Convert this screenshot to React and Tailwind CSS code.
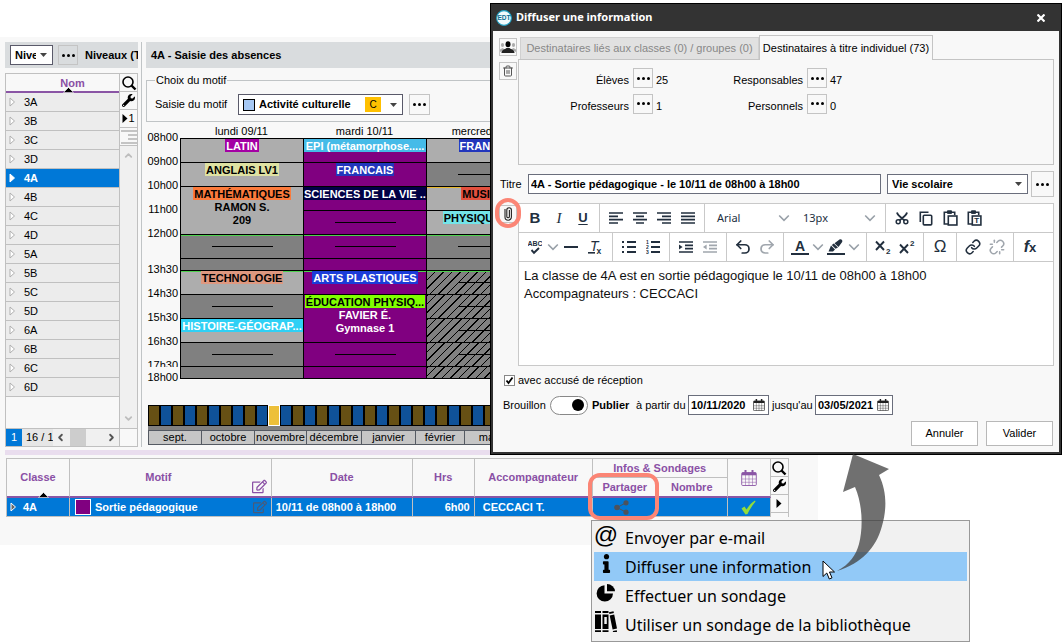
import { useState } from 'react'
import clsx from 'clsx'
import { FaWrench, FaInfo, FaRegEdit } from 'react-icons/fa'
import { ChevronDown, ChevronUp, ChevronLeft, ChevronRight, Trash2, Link, Unlink, Undo2, Redo2 } from 'lucide-react'

const CLASSES = ['3A', '3B', '3C', '3D', '4A', '4B', '4C', '4D', '5A', '5B', '5C', '5D', '6A', '6B', '6C', '6D']

const HOURS = ['08h00', '09h00', '10h00', '11h00', '12h00', '13h30', '14h30', '15h30', '16h30', '17h30', '18h00']

const MONTHS = [
  { name: 'sept.', width: 'w-[53px]' },
  { name: 'octobre', width: 'w-[53px]' },
  { name: 'novembre', width: 'w-[52px]' },
  { name: 'décembre', width: 'w-[55px]' },
  { name: 'janvier', width: 'w-[54px]' },
  { name: 'février', width: 'w-[49px]' },
  { name: 'mars', width: 'w-[53px]' },
]

const H1 = 'h-6'
const H2 = 'h-12'
const HALF = 'h-3'
const GREEN = 'shadow-[inset_0_1px_0_#4fd14f]'
const YELLOW = 'shadow-[inset_0_1px_0_#e8b92c]'

const DAYS = [
  {
    name: 'lundi 09/11',
    cells: [
      { h: H1, bg: 'bg-[#adadad]', label: 'LATIN', tag: 'bg-[#a400a4] text-white' },
      { h: H1, bg: 'bg-[#adadad]', label: 'ANGLAIS LV1', tag: 'bg-[#dfe2a2]' },
      { h: H2, bg: 'bg-[#adadad]', label: 'MATHÉMATIQUES', tag: 'bg-[#fb7b3c]', more: ['RAMON S.', '209'] },
      { h: H1, bg: 'bg-[#808080]', line: true, mark: GREEN },
      { h: HALF, bg: 'bg-[#808080]' },
      { h: H1, bg: 'bg-[#adadad]', label: 'TECHNOLOGIE', tag: 'bg-[#de9880]', mark: GREEN },
      { h: H1, bg: 'bg-[#808080]', line: true },
      { h: H1, bg: 'bg-[#adadad]', label: 'HISTOIRE-GÉOGRAP...', tag: 'bg-[#2fd0f5] text-white' },
      { h: H1, bg: 'bg-[#808080]', line: true },
      { h: HALF, bg: 'bg-[#808080]' },
    ],
  },
  {
    name: 'mardi 10/11',
    cells: [
      { h: H1, bg: 'bg-[#800080]', label: 'EPI (métamorphose.....', tag: 'w-full bg-[#45bbe8] text-white' },
      { h: H1, bg: 'bg-[#800080]', label: 'FRANCAIS', tag: 'bg-[#2236bc] text-white' },
      { h: H1, bg: 'bg-[#800080]', label: 'SCIENCES DE LA VIE .....', tag: 'w-full bg-[#000045] text-white' },
      { h: H1, bg: 'bg-[#800080]', line: true },
      { h: H1, bg: 'bg-[#800080]', line: true, mark: GREEN },
      { h: HALF, bg: 'bg-[#800080]' },
      { h: H1, bg: 'bg-[#800080]', label: 'ARTS PLASTIQUES', tag: 'bg-[#1b3cd8] text-white', mark: GREEN },
      { h: H2, bg: 'bg-[#800080] text-white', label: 'ÉDUCATION PHYSIQ...', tag: 'bg-[#80ff00] text-black', more: ['FAVIER É.', 'Gymnase 1'] },
      { h: H1, bg: 'bg-[#800080]', line: true },
      { h: HALF, bg: 'bg-[#800080]' },
    ],
  },
  {
    name: 'mercredi 11/11',
    cells: [
      { h: H1, bg: 'bg-[#adadad]', label: 'FRANCAIS', tag: 'bg-[#2236bc] text-white' },
      { h: H1, bg: 'bg-[#808080]', line: true },
      { h: H1, bg: 'bg-[#adadad]', label: 'MUSIQUE', tag: 'bg-[#e2503e]', mark: YELLOW },
      { h: H1, bg: 'bg-[#adadad]', label: 'PHYSIQUE-CHIM', tag: 'bg-[#74e4e8]' },
      { h: H1, bg: 'bg-[#808080]', line: true, mark: GREEN },
      { h: HALF, bg: 'bg-[#808080]' },
      { h: H1, hatched: true, line: true, mark: GREEN },
      { h: H1, hatched: true, line: true },
      { h: H1, hatched: true, line: true },
      { h: H1, hatched: true, line: true },
      { h: HALF, hatched: true },
    ],
  },
]

export default function App() {
  return (
    <div className="relative min-h-screen overflow-hidden bg-white font-['Liberation_Sans',Arial,sans-serif] text-[11px] text-black">
      <main className="mt-[37px] w-[77%] bg-[#f8f8f8] pt-[5px] pl-[5px] pb-7">
        <div className="flex">
          <LevelPanel />
          <AbsencePanel />
        </div>
        <div className="mt-[3px] h-[5px] bg-[#e9ddee]" />
        <AbsenceTable />
      </main>

      <InfoDialog />
      <ShareMenu />

      <div className="pointer-events-none absolute top-[473px] left-[588px] h-[47px] w-[71px] rounded-xl border-4 border-[#fb8575]" />
      <svg className="pointer-events-none absolute top-[454px] left-[830px]" width="64" height="128" viewBox="830 454 64 128">
        <path
          d="M853 454 L889 469 L879 475 C888 494 886 512 882 526 C876 548 862 563 837 571 C850 564 856 555 859 544 C863 528 863 506 855 487 L843 492 Z"
          fill="#404040"
          fillOpacity="0.75"
        />
      </svg>
      <svg className="pointer-events-none absolute top-[560px] left-[822px]" width="14" height="20" viewBox="0 0 14 20">
        <path d="M1 1 V16.5 L4.8 13 L7.3 19 L10 17.8 L7.5 12 H12.5 Z" fill="#fff" stroke="#000" />
      </svg>
    </div>
  )
}

function LevelPanel() {
  const [selected, setSelected] = useState('4A')
  return (
    <section className="flex w-[133px] shrink-0 flex-col">
      <header className="flex h-[26px] items-center bg-[#d9dcde] pl-[5px]">
        <label className="relative flex h-5 w-[43px] items-center">
          <select aria-label="Affichage" className="h-5 w-full appearance-none overflow-hidden border border-[#5a5a6a] bg-white pr-4 pl-1 font-bold">
            <option>Niveaux</option>
          </select>
          <Caret className="absolute right-1.5" />
        </label>
        <DotsButton label="Choisir les niveaux" className="ml-[5px] h-5 w-5 bg-[#d9dcde]" />
        <h2 className="ml-[7px] flex-1 overflow-hidden font-bold whitespace-nowrap">Niveaux (T</h2>
      </header>

      <div className="mt-[5px] flex flex-1 border border-[#c0c0c0]">
        <div className="flex flex-1 flex-col">
          <table className="w-full border-separate border-spacing-0">
            <thead>
              <tr>
                <th className="relative h-[19px] border-b-2 border-[#8a55a5] p-0 pl-5 leading-4 text-[#8a50a5]">
                  Nom
                  <SortMark />
                </th>
              </tr>
            </thead>
            <tbody>
              {CLASSES.map((c) => (
                <tr key={c} onClick={() => setSelected(c)} className={c === selected ? 'bg-[#0078d7] font-bold text-white' : 'bg-[#ececec]'}>
                  <td className="h-[19px] border-b border-[#c0c0c0] p-0">
                    <span className="flex items-center">
                      <RowMark filled={c === selected} />
                      <span className="pl-2">{c}</span>
                    </span>
                  </td>
                </tr>
              ))}
            </tbody>
          </table>
          <div className="flex-1" />
          <div className="flex h-[18px] items-stretch border-t border-[#c0c0c0]">
            <span className="flex w-4 items-center justify-center bg-[#0078d7] text-white">1</span>
            <span className="flex w-[31px] items-center bg-[#e6e6e6] pl-1 whitespace-nowrap">16 / 1</span>
            <div className="flex flex-1 items-center justify-between bg-[#f0f0f0] px-0.5 text-[#555]">
              <ChevronLeft size={11} strokeWidth={4} />
              <span className="mr-auto ml-1 h-full w-4 bg-[#cdcdcd]" />
              <ChevronRight size={11} strokeWidth={4} />
            </div>
          </div>
        </div>
        <div className="flex w-[18px] flex-col border-l border-[#c0c0c0]">
          <ToolColumn>
            <span className="flex items-center">
              <PlayMark />1
            </span>
          </ToolColumn>
          <div className="flex h-[18px] items-center justify-center border-b border-[#c0c0c0]">
            <svg width="16" height="16" viewBox="0 0 16 16" stroke="#c4c4c4" strokeWidth="2">
              <path d="M0 2h16M7 6h9M7 10h9M0 14h16" />
            </svg>
          </div>
          <div className="flex flex-1 flex-col items-center justify-between bg-[#f0f0f0] py-1 text-[#bdbdbd]">
            <ChevronUp size={11} strokeWidth={4} />
            <ChevronDown size={11} strokeWidth={4} />
          </div>
          <div className="h-[18px] border-t border-[#c0c0c0]" />
        </div>
      </div>
    </section>
  )
}

function AbsencePanel() {
  return (
    <section className="ml-[3px] min-w-0 flex-1 overflow-hidden border-l border-[#c0c4c6] pb-0.5 pl-1">
      <header className="flex h-[26px] items-center bg-[#d9dcde] pl-[5px]">
        <h2 className="font-bold">4A - Saisie des absences</h2>
      </header>

      <fieldset className="mt-[5px] border border-[#c0c4c6] px-2 pt-[7px] pb-[6px]">
        <legend className="px-px leading-[14px]">Choix du motif</legend>
        <div className="flex items-center">
          <label htmlFor="motif" className="w-[83px]">Saisie du motif</label>
          <div className="relative flex items-center">
            <select id="motif" className="h-[21px] w-[165px] appearance-none border border-[#5a5a6a] bg-white pl-5 font-bold">
              <option>Activité culturelle</option>
            </select>
            <span className="absolute left-[5px] h-3 w-3 border border-black bg-[#a6c8f4]" />
            <span className="absolute right-[22px] flex h-[15px] w-4 items-center justify-center bg-[#ffc000] text-[10px]">C</span>
            <Caret className="absolute right-1.5" />
          </div>
          <DotsButton label="Choisir un motif" className="ml-1.5 h-[21px] w-[21px]" />
        </div>
      </fieldset>

      <div className="mt-px flex">
        <div className="flex w-[34px] shrink-0 flex-col pt-0.5">
          {HOURS.map((h) => (
            <span
              key={h}
              className={clsx(
                'pr-0.5 text-right whitespace-nowrap',
                h === '17h30' ? 'h-[14px] overflow-hidden leading-6' : h === '18h00' ? 'h-5 leading-5' : 'h-6 leading-6',
                h === '13h30' && 'mt-3',
              )}
            >
              {h}
            </span>
          ))}
        </div>
        {DAYS.map((d) => (
          <Day key={d.name} day={d} />
        ))}
      </div>

      <div className="mt-[18px] ml-0.5">
        <div className="flex h-[21px] gap-0.5 overflow-hidden bg-black p-px">
          {Array.from({ length: 44 }, (_, i) => (
            <span
              key={i}
              className={clsx(
                'w-[10px] shrink-0',
                i === 10 ? 'bg-[#edc03a] outline outline-white' : i % 2 ? 'bg-[#0f5299]' : 'bg-[#665014]',
              )}
            />
          ))}
        </div>
        <div className="h-1 bg-[#808080]" />
        <div className="flex border border-[#555a63] bg-[#c6c6c6]">
          {MONTHS.map((m) => (
            <span key={m.name} className={clsx('h-[13px] border-r border-[#555a63] text-center leading-[13px]', m.width)}>
              {m.name}
            </span>
          ))}
        </div>
      </div>
    </section>
  )
}

function Day({ day }) {
  return (
    <div className="w-[123px] shrink-0">
      <div className="h-[15px] text-center leading-[17px]">{day.name}</div>
      <div className="border-b border-l border-black">
        {day.cells.map((c, i) => (
          <div
            key={i}
            className={clsx(
              'flex flex-col items-center overflow-hidden border-t border-black font-bold',
              c.h,
              c.mark,
              c.hatched ? 'bg-[#808080] bg-[repeating-linear-gradient(135deg,#000_0_1px,transparent_1px_6px)]' : c.bg,
              c.line && 'justify-center',
            )}
          >
            {c.line && <span className="h-px w-[61px] bg-black" />}
            {c.label && (
              <span className={clsx('h-[13px] text-center leading-[15px] whitespace-nowrap', c.tag, !c.tag.includes('w-full') && 'px-px')}>
                {c.label}
              </span>
            )}
            {c.more?.map((t) => (
              <span key={t} className="h-[13px] leading-[15px]">
                {t}
              </span>
            ))}
          </div>
        ))}
      </div>
    </div>
  )
}

function AbsenceTable() {
  const th = 'relative border-r border-b-2 border-r-[#c0c0c0] border-b-[#8a55a5] p-0 text-[#8a50a5]'
  const td = 'h-[19px] border-r border-b border-[#c0c0c0] p-0'
  return (
    <div className="mt-[3px] mr-[29px] ml-px flex border-t border-l border-[#c0c0c0]">
      <table className="flex-1 table-fixed border-separate border-spacing-0">
        <colgroup>
          <col className="w-[63px]" />
          <col />
          <col className="w-[141px]" />
          <col className="w-[62px]" />
          <col className="w-[118px]" />
          <col className="w-[64px]" />
          <col className="w-[71px]" />
          <col className="w-[43px]" />
        </colgroup>
        <thead>
          <tr>
            <th rowSpan={2} className={th}>
              Classe
              <SortMark />
            </th>
            <th rowSpan={2} className={th}>
              <span className="mr-6">Motif</span>
              <FaRegEdit size={15} className="absolute right-1 bottom-0.5" />
            </th>
            <th rowSpan={2} className={th}>Date</th>
            <th rowSpan={2} className={th}>Hrs</th>
            <th rowSpan={2} className={th}>Accompagnateur</th>
            <th colSpan={2} className="h-[19px] border-r border-b border-[#c0c0c0] p-0 text-[#8a50a5]">Infos &amp; Sondages</th>
            <th rowSpan={2} className={th} aria-label="Calendrier">
              <CalendarIcon className="mx-auto" size={16} color="#8a55a5" />
            </th>
          </tr>
          <tr>
            <th className="h-5 border-b-2 border-[#8a55a5] p-0 text-[#8a50a5]">Partager</th>
            <th className={th}>Nombre</th>
          </tr>
        </thead>
        <tbody>
          <tr className="bg-[#0078d7] font-bold text-white">
            <td className={td}>
              <span className="flex items-center">
                <RowMark filled={false} dark />
                <span className="pl-1.5">4A</span>
              </span>
            </td>
            <td className={td}>
              <span className="flex items-center pr-1 pl-[5px]">
                <span className="h-4 w-4 border border-white bg-[#800080]" />
                <span className="pl-1">Sortie pédagogique</span>
                <FaRegEdit size={14} className="ml-auto text-[#4a5a78]" />
              </span>
            </td>
            <td className={clsx(td, 'pl-1')}>10/11 de 08h00 à 18h00</td>
            <td className={clsx(td, 'pr-1 text-right')}>6h00</td>
            <td className={clsx(td, 'pl-2')}>CECCACI T.</td>
            <td className="border-b border-[#c0c0c0] p-0">
              <svg className="ml-[21px]" width="15" height="15" viewBox="0 0 15 15" fill="#4c525c">
                <circle cx="3" cy="7.5" r="2.8" />
                <circle cx="12" cy="2.8" r="2.6" />
                <circle cx="12" cy="12.2" r="2.6" />
                <path d="M12 2.8 L3 7.5 L12 12.2" fill="none" stroke="#4c525c" />
              </svg>
            </td>
            <td className={td} />
            <td className={td}>
              <svg className="mx-auto" width="15" height="15" viewBox="0 0 15 15">
                <path d="M0.5 8.5 L3.5 6.5 L5.5 9.5 C8 5.5 10.5 2.5 14 0.5 L14.5 1.5 C11.5 5 9 9 6.5 14 L4.5 14.5 Z" fill="#92dc3a" />
              </svg>
            </td>
          </tr>
        </tbody>
      </table>
      <div className="flex w-[18px] flex-col border-r border-[#c0c0c0]">
        <ToolColumn>
          <PlayMark />
        </ToolColumn>
      </div>
    </div>
  )
}

function ToolColumn({ children }) {
  const btn = 'flex h-[18px] items-center justify-center border-b border-[#c0c0c0] bg-[#f8f8f8]'
  return (
    <>
      <button className={btn} aria-label="Rechercher">
        <svg width="16" height="16" viewBox="0 0 16 16" fill="none" stroke="#000">
          <circle cx="7" cy="7" r="5" strokeWidth="1.6" />
          <path d="M10.5 10.5 L14.5 14.5" strokeWidth="2.4" />
        </svg>
      </button>
      <button className={btn} aria-label="Paramètres">
        <FaWrench size={13} />
      </button>
      <button className={btn} aria-label="Développer">
        {children}
      </button>
    </>
  )
}

function InfoDialog() {
  const [receipt, setReceipt] = useState(true)
  const [published, setPublished] = useState(true)
  return (
    <div role="dialog" aria-label="Diffuser une information" className="absolute top-[3px] right-0 left-[490px] border border-black bg-[#333] p-0.5 pt-0">
      <header className="flex h-[27px] items-center pr-3.5 pl-[3px] text-white">
        <svg width="16" height="16" viewBox="0 0 16 16">
          <circle cx="8" cy="8" r="7.4" fill="#f2fafc" stroke="#1a9cc0" strokeWidth="1.1" />
          <text x="8" y="10.4" textAnchor="middle" fontSize="6.5" fontWeight="bold" fill="#0b6d92">EDT</text>
        </svg>
        <h1 className="ml-1 font-['Noto_Sans',sans-serif] text-[11px] font-bold">Diffuser une information</h1>
        <button aria-label="Fermer" className="ml-auto">
          <svg width="8" height="8" viewBox="0 0 8 8" stroke="#fff" strokeWidth="2.2">
            <path d="M0.5 0.5 L7.5 7.5 M7.5 0.5 L0.5 7.5" />
          </svg>
        </button>
      </header>

      <div className="bg-[#f8f8f8] pt-1 pr-[5px] pb-[6px] pl-[6px]">
        <div className="flex">
          <div className="flex w-[19px] flex-col gap-[6px] pt-[3px]">
            <IconButton label="Destinataires">
              <svg width="16" height="14" viewBox="0 0 16 14">
                <g fill="#aaa">
                  <ellipse cx="2.5" cy="5" rx="1.6" ry="2" />
                  <ellipse cx="13.5" cy="5" rx="1.6" ry="2" />
                  <path d="M0 12V9.5L2.5 8 5 9.5M16 12V9.5L13.5 8 11 9.5" />
                </g>
                <ellipse cx="8" cy="4.2" rx="2.5" ry="3" fill="#000" />
                <path d="M1.5 13 C1.5 9.5 5 9.5 6.5 8 H9.5 C11 9.5 14.5 9.5 14.5 13Z" fill="#222" />
              </svg>
            </IconButton>
            <IconButton label="Supprimer">
              <Trash2 size={12} color="#555" />
            </IconButton>
          </div>
          <div className="flex-1">
            <div role="tablist" className="flex items-end pl-0.5">
              <button role="tab" aria-selected="false" className="h-[22px] w-[239px] border border-b-0 border-[#d0d0d0] bg-[#e1e1e1] whitespace-nowrap text-[#888]">
                Destinataires liés aux classes (0) / groupes (0)
              </button>
              <button role="tab" aria-selected="true" className="-mb-px h-[25px] w-[174px] border border-b-0 border-[#c4c4c4] bg-[#f8f8f8] whitespace-nowrap">
                Destinataires à titre individuel (73)
              </button>
            </div>
            <div className="flex h-[106px] items-start border border-[#c4c4c4] pt-2">
              <div className="flex w-[174px] flex-col gap-[5px]">
                <Recipient label="Élèves" count={25} />
                <Recipient label="Professeurs" count={1} />
              </div>
              <div className="flex w-[174px] flex-col gap-[5px]">
                <Recipient label="Responsables" count={47} />
                <Recipient label="Personnels" count={0} />
              </div>
            </div>
          </div>
        </div>

        <div className="mt-[6px] flex h-[26px] items-center">
          <label htmlFor="titre" className="w-[29px] pl-px">Titre</label>
          <input
            id="titre"
            defaultValue="4A - Sortie pédagogique - le 10/11 de 08h00 à 18h00"
            className="h-5 min-w-0 flex-1 border border-[#6a6e7c] bg-white px-0.5 font-bold"
          />
          <div className="relative ml-1.5 flex items-center">
            <select aria-label="Catégorie" className="h-5 w-[141px] appearance-none border border-[#6a6e7c] bg-white pl-1 font-bold">
              <option>Vie scolaire</option>
            </select>
            <Caret className="absolute right-1.5" />
          </div>
          <DotsButton label="Choisir une catégorie" className="ml-[3px] h-[26px] w-[23px]" />
        </div>

        <div className="mt-[6px] flex">
          <div className="relative w-[19px]">
            <button aria-label="Joindre un fichier" className="mt-0.5 flex h-[18px] w-[18px] items-center justify-center border border-[#c4c4c4]">
              <svg width="12" height="16" viewBox="0 0 12 16" fill="none" stroke="#222" strokeWidth="1.1">
                <path d="M3 3 V11 A3.2 3.2 0 0 0 9.4 11 V4 A2.3 2.3 0 0 0 4.8 4 V10.5 A1.3 1.3 0 0 0 7.4 10.5 V4" />
              </svg>
            </button>
            <span className="pointer-events-none absolute -top-[5px] -left-1 h-[30px] w-[26px] rounded-full border-4 border-[#fb8575]" />
          </div>
          <div className="flex-1 border border-[#c9c9c9] bg-white">
            <Toolbar />
            <textarea
              aria-label="Contenu"
              defaultValue={'La classe de 4A est en sortie pédagogique le 10/11 de 08h00 à 18h00\nAccompagnateurs : CECCACI'}
              className="block h-[103px] w-full resize-none px-[5px] py-[5px] text-[13px] leading-[18px] text-[#111]"
            />
          </div>
        </div>

        <label className="mt-[7px] flex h-[14px] items-center gap-[3px] pl-[5px]">
          <span className="relative flex h-[11px] w-[11px]">
            <input
              type="checkbox"
              checked={receipt}
              onChange={(e) => setReceipt(e.target.checked)}
              className="h-[11px] w-[11px] appearance-none border border-[#888] bg-white"
            />
            {receipt && (
              <svg className="pointer-events-none absolute inset-0" width="11" height="11" viewBox="0 0 11 11" fill="none" stroke="#000" strokeWidth="1.8">
                <path d="M2.5 5.5 L4.5 8 L8.5 2.5" />
              </svg>
            )}
          </span>
          avec accusé de réception
        </label>

        <div className="mt-2 flex h-5 items-center pl-1">
          <span className="w-[47px]">Brouillon</span>
          <label className="flex items-center">
            <input type="checkbox" role="switch" aria-label="Publier" checked={published} onChange={(e) => setPublished(e.target.checked)} className="peer sr-only" />
            <span className="flex h-[19px] w-[38px] items-center justify-start rounded-full border border-[#888] bg-white px-[3px] peer-checked:justify-end">
              <span className="h-3 w-3 rounded-full bg-black" />
            </span>
            <span className="ml-1 w-[44px] font-bold">Publier</span>
          </label>
          <label htmlFor="debut" className="w-[52px] whitespace-nowrap">à partir du</label>
          <DateField id="debut" value="10/11/2020" className="w-[81px]" />
          <label htmlFor="fin" className="ml-[3px] w-[43px] whitespace-nowrap">jusqu'au</label>
          <DateField id="fin" value="03/05/2021" className="w-[78px]" />
        </div>

        <div className="mt-[6px] flex justify-end gap-2 pr-px">
          <button className="h-[25px] w-[67px] border border-[#b8b8b8] bg-white">Annuler</button>
          <button className="h-[25px] w-[67px] border border-[#b8b8b8] bg-white">Valider</button>
        </div>
      </div>
    </div>
  )
}

function Recipient({ label, count }) {
  return (
    <div className="flex items-center">
      <span className="w-[110px] pt-1 text-right">{label}</span>
      <DotsButton label={label} className="mr-[3px] ml-1 h-5 w-5" />
      <span className="pt-1">{count}</span>
    </div>
  )
}

function DateField({ id, value, className }) {
  return (
    <div className={clsx('flex h-5 items-center border border-[#6a6e7c] bg-white pr-[3px]', className)}>
      <input id={id} defaultValue={value} className="min-w-0 flex-1 pl-0.5 font-bold" />
      <CalendarIcon size={12} color="#222" />
    </div>
  )
}

function Toolbar() {
  const group = 'flex items-center border-r border-[#c9c9c9] text-[#222f3e]'
  return (
    <div>
      <div className="flex h-[29px] border-b border-[#c9c9c9]">
        <div className={clsx(group, 'w-[81px] pl-1')}>
          <Tool label="Gras"><span className="text-[15px] font-bold">B</span></Tool>
          <Tool label="Italique"><span className="font-['Liberation_Serif',serif] text-[15px] italic">I</span></Tool>
          <Tool label="Souligné"><span className="text-[13px] font-bold underline underline-offset-2">U</span></Tool>
        </div>
        <div className={clsx(group, 'w-[105px] pl-1')}>
          <Tool label="Aligner à gauche"><Bars d="M0 1h14M0 4.3h9M0 7.6h14M0 11h9" /></Tool>
          <Tool label="Centrer"><Bars d="M0 1h14M3 4.3h8M0 7.6h14M3 11h8" /></Tool>
          <Tool label="Aligner à droite"><Bars d="M0 1h14M5 4.3h9M0 7.6h14M5 11h9" /></Tool>
          <Tool label="Justifier"><Bars d="M0 1h14M0 4.3h14M0 7.6h14M0 11h14" /></Tool>
        </div>
        <div className={clsx(group, "w-[181px] pl-3 font-['Noto_Sans',sans-serif] text-[11px]")}>
          <button className="flex w-[73px] items-center justify-between">
            Arial <Chevron />
          </button>
          <button className="ml-[13px] flex w-[73px] items-center justify-between">
            13px <Chevron />
          </button>
        </div>
        <div className="flex items-center pl-1 text-[#222f3e]">
          <Tool label="Couper">
            <svg width="14" height="14" viewBox="0 0 14 14" fill="none" stroke="currentColor">
              <circle cx="3.2" cy="10.8" r="2" strokeWidth="1.5" />
              <circle cx="10.8" cy="10.8" r="2" strokeWidth="1.5" />
              <path d="M2 1.5 C3 5 7 7 9.5 9.5 M12 1.5 C11 5 7 7 4.5 9.5" strokeWidth="1.9" />
            </svg>
          </Tool>
          <Tool label="Copier">
            <svg width="14" height="15" viewBox="0 0 14 15" fill="none" stroke="currentColor" strokeWidth="1.6">
              <path d="M1.3 11V1.3H9.5" />
              <rect x="4.3" y="4.3" width="8.4" height="9.6" rx="1" />
            </svg>
          </Tool>
          <Tool label="Coller"><Clipboard /></Tool>
          <Tool label="Coller comme texte"><Clipboard text /></Tool>
        </div>
      </div>

      <div className="flex h-[29px] border-b border-[#c9c9c9]">
        <div className={clsx(group, 'w-[94px] pl-1')}>
          <Tool label="Orthographe">
            <svg width="14" height="15" viewBox="0 0 14 15">
              <text x="7" y="6" textAnchor="middle" fontSize="7" fontWeight="bold" fill="currentColor">ABC</text>
              <path d="M3.5 10 L6 12.8 L11 8" fill="none" stroke="currentColor" strokeWidth="1.9" />
            </svg>
          </Tool>
          <Chevron />
          <Tool label="Ligne horizontale"><span className="h-0.5 w-[14px] bg-current" /></Tool>
          <Tool label="Effacer la mise en forme">
            <svg width="16" height="16" viewBox="0 0 16 16" fill="currentColor">
              <text x="3" y="12" fontSize="14" fontStyle="italic">T</text>
              <text x="9.5" y="14.5" fontSize="8.5" fontWeight="bold">x</text>
              <path d="M1 13h7v1.6H1z" />
            </svg>
          </Tool>
        </div>
        <div className={clsx(group, 'w-[57px] pl-1')}>
          <Tool label="Liste à puces">
            <svg width="14" height="12" viewBox="0 0 14 12" stroke="currentColor" strokeWidth="1.8">
              <path d="M0 1h2M0 6h2M0 11h2M5 1h9M5 6h9M5 11h9" />
            </svg>
          </Tool>
          <Tool label="Liste numérotée">
            <svg width="14" height="14" viewBox="0 0 14 14">
              <g fontSize="5" fontWeight="bold" fill="currentColor">
                <text x="0" y="4">1</text>
                <text x="0" y="9">2</text>
                <text x="0" y="14">3</text>
              </g>
              <path d="M5 2h9M5 7h9M5 12h9" stroke="currentColor" strokeWidth="1.8" />
            </svg>
          </Tool>
        </div>
        <div className={clsx(group, 'w-[57px] pl-1')}>
          <Tool label="Augmenter le retrait"><Bars d="M0 1h14M6 4.3h8M6 7.6h8M0 11h14" tip="M0 3.5L3.6 6L0 8.5Z" /></Tool>
          <Tool label="Diminuer le retrait" muted><Bars d="M0 1h14M6 4.3h8M6 7.6h8M0 11h14" tip="M3.6 3.5L0 6L3.6 8.5Z" /></Tool>
        </div>
        <div className={clsx(group, 'w-[57px] pl-1')}>
          <Tool label="Annuler la saisie"><Undo2 size={18} strokeWidth={2.3} /></Tool>
          <Tool label="Rétablir" muted><Redo2 size={18} strokeWidth={2.3} /></Tool>
        </div>
        <div className={clsx(group, 'w-[83px] pl-1')}>
          <Tool label="Couleur du texte">
            <span className="flex w-[18px] flex-col items-center border-b-2 border-current text-[14px] leading-[14px] font-bold">A</span>
          </Tool>
          <Chevron />
          <Tool label="Surlignage">
            <svg width="18" height="16" viewBox="0 0 18 16" fill="currentColor">
              <path d="M0 14h18v2H0z" />
              <path d="M1.5 12.5 L4 6.5 L8 10.5 L6 12.5Z M4.8 6 L8.5 9.8 L11 8.5 L6.8 4.6Z M7.5 4.2 L12.5 0.5 C14.5 -0.3 16 1.5 15 3.3 L11.5 8Z" />
            </svg>
          </Tool>
          <Chevron />
        </div>
        <div className={clsx(group, 'w-[57px] pl-1')}>
          <Tool label="Indice"><Script y={14} /></Tool>
          <Tool label="Exposant"><Script y={6} /></Tool>
        </div>
        <div className={clsx(group, 'w-[33px] pl-1')}>
          <Tool label="Caractères spéciaux"><span className="text-[17px]">Ω</span></Tool>
        </div>
        <div className={clsx(group, 'w-[57px] pl-1')}>
          <Tool label="Lien"><Link size={16} strokeWidth={2.3} /></Tool>
          <Tool label="Retirer le lien" muted><Unlink size={16} strokeWidth={2.3} /></Tool>
        </div>
        <div className="flex items-center pl-1 text-[#222f3e]">
          <Tool label="Formule"><span className="text-[16px] font-bold"><i>f</i><span className="text-[13px]">x</span></span></Tool>
        </div>
      </div>
    </div>
  )
}

function Tool({ label, muted, children }) {
  return (
    <button aria-label={label} title={label} className={clsx('flex h-6 w-6 shrink-0 items-center justify-center', muted && 'text-[#a0a6ad]')}>
      {children}
    </button>
  )
}

function Script({ y }) {
  return (
    <svg width="16" height="15" viewBox="0 0 16 15" fill="none" stroke="currentColor">
      <path d={y > 8 ? 'M1 1.5L9 10M9 1.5L1 10' : 'M1 4.5L9 13M9 4.5L1 13'} strokeWidth="1.9" />
      <text x="11" y={y} fontSize="8" fontWeight="bold" fill="currentColor" stroke="none">2</text>
    </svg>
  )
}

function Bars({ d, tip }) {
  return (
    <svg width="14" height="12" viewBox="0 0 14 12">
      <path d={d} stroke="currentColor" strokeWidth="1.7" />
      {tip && <path d={tip} fill="currentColor" />}
    </svg>
  )
}

function Clipboard({ text }) {
  return (
    <svg width="15" height="16" viewBox="0 0 15 16" fill="none" stroke="currentColor" strokeWidth="1.6">
      <path d="M5 14H1.3V2.3H11.7V5" />
      <path d="M4.5 0.8h4v2.6h-4z" fill="currentColor" strokeWidth="1" />
      <rect x="5.3" y="6" width="8.6" height="9" />
      {text && (
        <text x="9.6" y="13.4" textAnchor="middle" fontSize="8" fontWeight="bold" fill="currentColor" stroke="none">T</text>
      )}
    </svg>
  )
}

function Chevron() {
  return (
    <svg className="shrink-0" width="12" height="8" viewBox="0 0 12 8" fill="none" stroke="#98a0a8" strokeWidth="1.6">
      <path d="M1.2 1.5 L6 6.3 L10.8 1.5" />
    </svg>
  )
}

function ShareMenu() {
  const items = [
    { label: 'Envoyer par e-mail', icon: <span className="text-[24px] leading-6">@</span> },
    { label: 'Diffuser une information', icon: <FaInfo size={19} />, active: true },
    { label: 'Effectuer un sondage', icon: <PieIcon /> },
    { label: 'Utiliser un sondage de la bibliothèque', icon: <BooksIcon /> },
  ]
  return (
    <div role="menu" className="absolute top-[520px] left-[591px] w-[379px] border border-[#999] bg-[#f1f1f1] p-0.5 font-['Noto_Sans',sans-serif] text-[16px]">
      {items.map((i) => (
        <button key={i.label} role="menuitem" className={clsx('flex h-[29px] w-full items-center text-left', i.active && 'bg-[#92c9f7]')}>
          <span className="flex w-6 justify-center pb-[6px] font-['Liberation_Sans',sans-serif]">{i.icon}</span>
          <span className="pl-[7px] whitespace-nowrap">{i.label}</span>
        </button>
      ))}
    </div>
  )
}

function PieIcon() {
  return (
    <svg width="20" height="18" viewBox="0 0 20 18">
      <path d="M8.5 1.2 V9.5 H17 A8.2 8.2 0 1 1 8.5 1.2Z" fill="#000" />
      <path d="M11 0 A8 7.5 0 0 1 19 7.3 H11Z" fill="#000" />
    </svg>
  )
}

function BooksIcon() {
  return (
    <svg width="22" height="21" viewBox="0 0 22 21">
      <path d="M0 0h6v2H0zM0 3.5h6V18H0zM0 19.3h6V21H0zM7.5 0h6v2h-6zM7.5 3.5h6V18h-6zM7.5 19.3h6V21h-6z" fill="#000" />
      <path d="M9.3 6h2.5v7H9.3z" fill="#f1f1f1" />
      <path d="M14 1.2l4.5-1 .4 1.8-4.5 1zM14.7 4.4l4.5-1L22 17.6l-4.4 1zM17.8 20l4-.8.2 1.8h-4z" fill="#000" />
    </svg>
  )
}

function CalendarIcon({ size, color, className }) {
  return (
    <svg className={className} width={size} height={size} viewBox="0 0 16 16" fill="none" stroke={color}>
      <rect x="0.7" y="2.5" width="14.6" height="13" rx="1" strokeWidth="0.9" />
      <path d="M1 4h14" strokeWidth="2.6" />
      <path d="M1 9h14M1 12.3h14M4.5 5v10.5M8 5v10.5M11.5 5v10.5" strokeWidth="0.5" />
      <path d="M4.5 0v4M11.5 0v4" strokeWidth="2" />
    </svg>
  )
}

function DotsButton({ label, className }) {
  return (
    <button aria-label={label} className={clsx('flex shrink-0 items-center justify-center gap-0.5 border border-[#c4c4c4]', className)}>
      <i className="h-[3px] w-[3px] rounded-full bg-black" />
      <i className="h-[3px] w-[3px] rounded-full bg-black" />
      <i className="h-[3px] w-[3px] rounded-full bg-black" />
    </button>
  )
}

function IconButton({ label, children }) {
  return (
    <button aria-label={label} className="flex h-[18px] w-[18px] items-center justify-center border border-[#c4c4c4]">
      {children}
    </button>
  )
}

function Caret({ className }) {
  return (
    <svg className={clsx('pointer-events-none', className)} width="7" height="4" viewBox="0 0 7 4">
      <path d="M0 0h7L3.5 4Z" fill="#444" />
    </svg>
  )
}

function RowMark({ filled, dark }) {
  return (
    <svg className="ml-[3px]" width="7" height="10" viewBox="0 0 7 10">
      <path d="M1 1 V9 L5.5 5 Z" fill={dark ? '#666' : '#fff'} stroke={filled || dark ? '#fff' : '#b0b0b0'} />
    </svg>
  )
}

function PlayMark() {
  return (
    <svg width="6" height="9" viewBox="0 0 6 9">
      <path d="M0.5 0V9L5.5 4.5Z" fill="#000" />
    </svg>
  )
}

function SortMark() {
  return (
    <svg className="absolute -bottom-0.5 left-1/2" width="11" height="6" viewBox="0 0 11 6">
      <path d="M0.5 5.5 L5.5 0.5 L10.5 5.5Z" fill="#000" stroke="#fff" strokeWidth="0.6" />
    </svg>
  )
}
